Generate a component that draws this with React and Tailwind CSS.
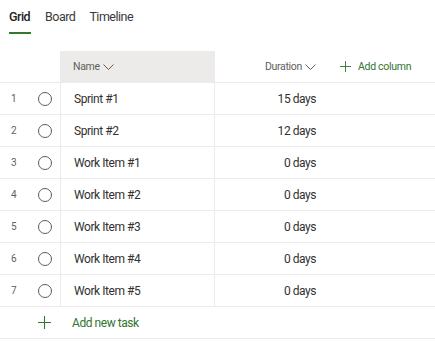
import React from 'react';

const rows = [
  { n: 1, name: 'Sprint #1', dur: '15 days' },
  { n: 2, name: 'Sprint #2', dur: '12 days' },
  { n: 3, name: 'Work Item #1', dur: '0 days' },
  { n: 4, name: 'Work Item #2', dur: '0 days' },
  { n: 5, name: 'Work Item #3', dur: '0 days' },
  { n: 6, name: 'Work Item #4', dur: '0 days' },
  { n: 7, name: 'Work Item #5', dur: '0 days' },
];

function Chevron() {
  return (
    <svg width="11" height="6" viewBox="0 0 11 6" className="ml-[3px]">
      <path d="M0.5 0.5 L5.5 5.5 L10.5 0.5" fill="none" stroke="#605e5c" strokeWidth="1" />
    </svg>
  );
}

function Plus({ size = 12 }) {
  return (
    <svg width={size} height={size} viewBox="0 0 12 12">
      <path d="M6 0 V12 M0 6 H12" stroke="#31752f" strokeWidth="1" />
    </svg>
  );
}

export default function App() {
  return (
    <div className="w-[435px] h-[360px] bg-white text-[#323130]" style={{ fontFamily: 'Roboto, "Noto Sans", sans-serif' }}>
      {/* tabs */}
      <div className="flex h-[51px] pl-[9px] gap-[14px] text-[12.5px] tracking-[-0.5px]">
        <div className="flex flex-col pt-[7px]">
          <span className="font-medium text-[#252423] leading-[20px]">Grid</span>
          <div className="mt-[5px] h-[2px] w-[22px] bg-[#2f7a2f]" />
        </div>
        <span className="pt-[7px] leading-[20px] text-[#3b3a39]">Board</span>
        <span className="pt-[7px] leading-[20px] text-[#3b3a39]">Timeline</span>
      </div>

      {/* header */}
      <div className="flex h-[32px] border-b border-[#edebe9] text-[10.5px] tracking-[-0.3px] text-[#605e5c]">
        <div className="w-[60px]" />
        <div className="w-[154px] bg-[#edebe9] flex items-center pl-[13px]">
          Name <Chevron />
        </div>
        <div className="w-[103px] border-l border-[#edebe9] flex items-center justify-end pr-[1px]">
          Duration <Chevron />
        </div>
        <div className="flex items-center pl-[23px] gap-[7px] text-[#31752f]">
          <Plus size={11} />
          <span>Add column</span>
        </div>
      </div>

      {/* rows */}
      {rows.map((r) => (
        <div key={r.n} className="flex h-[32px] border-b border-[#edebe9] text-[12px] tracking-[-0.45px]">
          <div className="w-[30px] flex items-center pl-[11px] text-[10px] tracking-normal text-[#605e5c]">{r.n}</div>
          <div className="w-[30px] flex items-center justify-center">
            <div className="w-[14px] h-[14px] rounded-full border border-[#605e5c]" />
          </div>
          <div className="w-[154px] border-l border-[#edebe9] flex items-center pl-[13px]">{r.name}</div>
          <div className="w-[103px] border-l border-[#edebe9] flex items-center justify-end pr-[1px]">{r.dur}</div>
        </div>
      ))}

      {/* add task */}
      <div className="flex h-[32px] border-b border-[#edebe9] items-center text-[12px] tracking-[-0.45px] text-[#31752f]">
        <div className="w-[60px] flex justify-end pr-[9px]">
          <Plus size={13} />
        </div>
        <span className="pl-[12px]">Add new task</span>
      </div>
    </div>
  );
}
